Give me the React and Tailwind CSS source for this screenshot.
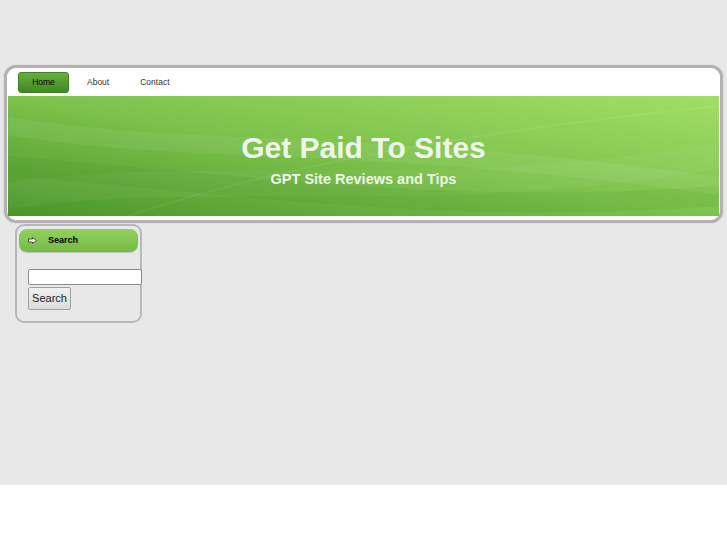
import React from 'react';

// Simple static page: header with nav + banner, then a sidebar search box.

const NavLink = ({ label, active }) => (
    <a
        href="#"
        className={
            active
                ? 'w-[51px] h-[21px] flex items-center justify-center rounded-[3px] border border-[#3f7f22] bg-gradient-to-b from-[#6aad3d] to-[#3f8a22] text-black text-[8.5px]'
                : 'h-[21px] flex items-center text-[#333] text-[8.5px]'
        }
    >
        {label}
    </a>
);

const Banner = () => (
    <div className="relative h-[120px] mx-[1px] overflow-hidden bg-gradient-to-tr from-[#4b9629] via-[#7cc24c] to-[#a2de66]">
        <svg className="absolute inset-0 w-full h-full" viewBox="0 0 712 120" preserveAspectRatio="none">
            <path d="M0 30 C 180 60, 360 40, 712 90" stroke="#ffffff" strokeOpacity="0.06" strokeWidth="18" fill="none" />
            <path d="M0 100 C 200 70, 420 110, 712 60" stroke="#ffffff" strokeOpacity="0.04" strokeWidth="26" fill="none" />
            <path d="M120 120 C 300 60, 520 30, 712 10" stroke="#ffffff" strokeOpacity="0.06" strokeWidth="2" fill="none" />
            <path d="M0 70 C 250 90, 450 120, 712 100" stroke="#2f6f14" strokeOpacity="0.08" strokeWidth="20" fill="none" />
        </svg>
        <div className="relative flex flex-col items-center pt-[34px] text-[#eef6e8] font-bold">
            <h1 className="text-[30px] leading-[35px]">Get Paid To Sites</h1>
            <p className="text-[14.5px] leading-[18px] mt-[5px]">GPT Site Reviews and Tips</p>
        </div>
    </div>
);

export default function App() {
    return (
        <div className="min-h-[545px] bg-white" style={{ fontFamily: '"Liberation Sans", Arial, sans-serif' }}>
            <div className="h-[485px] bg-[#e8e8e8] pt-[65px]">
                <div className="mx-[4px] w-[719px] rounded-[12px] border-[3px] border-[#b2b2b2] bg-white pb-[4px] shadow-[0_0_2px_#c8c8c8]">
                    <nav className="h-[28px] flex items-center pl-[11px] pt-[1px]">
                        <NavLink label="Home" active />
                        <div className="ml-[18px]"><NavLink label="About" /></div>
                        <div className="ml-[31px]"><NavLink label="Contact" /></div>
                    </nav>
                    <Banner />
                </div>
                <div className="ml-[15px] mt-[1px] w-[127px] h-[99px] rounded-[9px] border-2 border-[#b8b8b8] pt-[3px] px-[2px]">
                    <div className="h-[23px] rounded-[8px] bg-gradient-to-b from-[#91d15e] to-[#74ba44] flex items-center pl-[9px] shadow-[0_1px_1px_#c0c0c0]">
                        <svg width="9" height="7" viewBox="0 0 9 7" className="mr-[11px]">
                            <path d="M0.5 2 H4.5 V0.5 L8.5 3.5 L4.5 6.5 V5 H0.5 Z" fill="#f2f2f2" stroke="#333" strokeWidth="0.8" />
                        </svg>
                        <span className="text-[9px] font-bold text-black">Search</span>
                    </div>
                    <div className="pl-[9px] pt-[17px]">
                        <input type="text" className="block w-[114px] h-[16px] bg-white border border-[#8a8a8a] rounded-[2px]" />
                        <button className="mt-[1px] h-[23px] w-[43px] rounded-[2px] border border-[#a0a0a0] bg-gradient-to-b from-[#f0f0f0] to-[#dcdcdc] text-[11px] text-[#222]">
                            Search
                        </button>
                    </div>
                </div>
            </div>
        </div>
    );
}
